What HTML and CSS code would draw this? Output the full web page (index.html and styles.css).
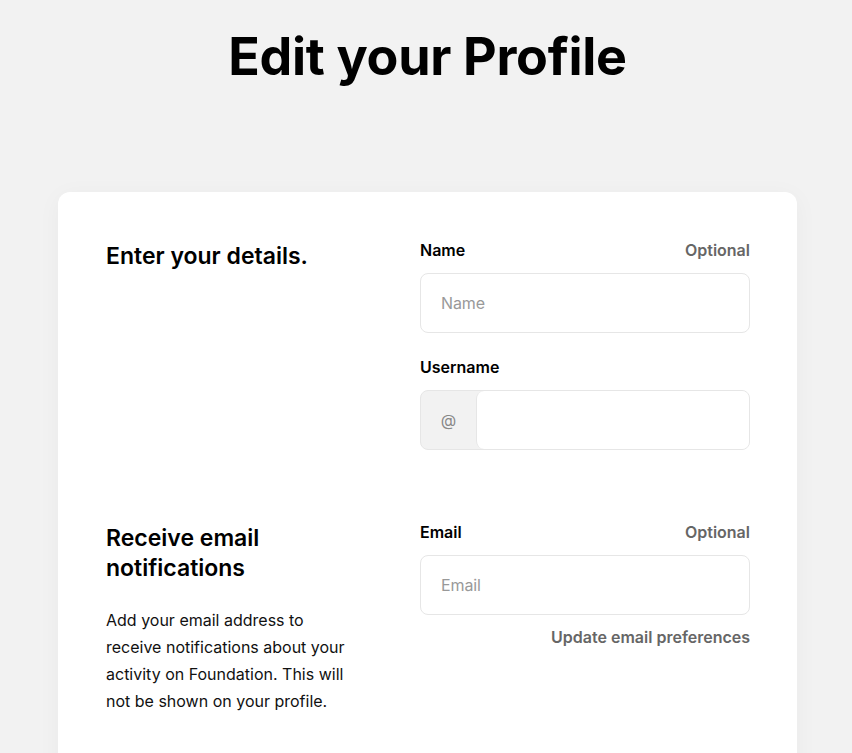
FILE: index.html
```html
<!DOCTYPE html>
<html lang="en">
<head>
<meta charset="utf-8">
<title>Edit your Profile</title>
<link rel="stylesheet" href="styles.css">
</head>
<body>
<main class="page">
  <h1 class="title">Edit your Profile</h1>
  <section class="card">
    <div class="row">
      <div class="intro">
        <h2 class="intro-title">Enter your details.</h2>
      </div>
      <div class="fields">
        <div class="field">
          <div class="label-row">
            <label class="label">Name</label>
            <span class="optional">Optional</span>
          </div>
          <div class="input"><span class="placeholder">Name</span></div>
        </div>
        <div class="field">
          <div class="label-row">
            <label class="label">Username</label>
          </div>
          <div class="input input-group">
            <span class="prefix">@</span>
            <span class="input-main"></span>
          </div>
        </div>
      </div>
    </div>
    <div class="row">
      <div class="intro">
        <h2 class="intro-title">Receive email notifications</h2>
        <p class="intro-text">Add your email address to receive notifications about your activity on Foundation. This will not be shown on your profile.</p>
      </div>
      <div class="fields">
        <div class="field">
          <div class="label-row">
            <label class="label">Email</label>
            <span class="optional">Optional</span>
          </div>
          <div class="input"><span class="placeholder">Email</span></div>
          <a class="link">Update email preferences</a>
        </div>
      </div>
    </div>
  </section>
</main>
</body>
</html>
```

FILE: styles.css
```css
* { box-sizing: border-box; }
html, body {
  margin: 0;
  padding: 0;
  background: #f2f2f2;
  font-family: "Inter", "Liberation Sans", sans-serif;
  color: #000;
}
.page {
  padding: 26px 55px 0 58px;
  display: flex;
  flex-direction: column;
  align-items: stretch;
}
.title {
  margin: 0;
  text-align: center;
  font-size: 52px;
  line-height: 62px;
  font-weight: 700;
  letter-spacing: -0.3px;
}
.card {
  margin-top: 104px;
  background: #fff;
  border-radius: 12px;
  box-shadow: 0 4px 24px rgba(0, 0, 0, 0.04);
  padding: 48px 47px 48px 48px;
  display: flex;
  flex-direction: column;
  gap: 72px;
  min-height: 600px;
}
.row {
  display: grid;
  grid-template-columns: 1fr 330px;
}
.intro {
  max-width: 250px;
}
.intro-title {
  margin: 1px 0 0;
  font-size: 23px;
  line-height: 30px;
  font-weight: 600;
  letter-spacing: 0;
}
.intro-text {
  margin: 24px 0 0;
  font-size: 16px;
  line-height: 27px;
  font-weight: 400;
  color: #111;
  letter-spacing: 0;
}
.fields {
  display: flex;
  flex-direction: column;
  gap: 24px;
}
.field {
  display: flex;
  flex-direction: column;
}
.label-row {
  display: flex;
  justify-content: space-between;
  align-items: baseline;
  margin-bottom: 13px;
  height: 20px;
}
.label {
  font-size: 16px;
  font-weight: 600;
  line-height: 20px;
}
.optional {
  font-size: 16px;
  font-weight: 600;
  line-height: 20px;
  color: #666;
}
.input {
  height: 60px;
  border: 1px solid #e6e6e6;
  border-radius: 8px;
  display: flex;
  align-items: center;
  padding: 0 20px;
  background: #fff;
}
.placeholder {
  font-size: 16px;
  color: #999;
  letter-spacing: -0.1px;
}
.input-group {
  padding: 0;
  overflow: hidden;
  background: #f2f2f2;
}
.prefix {
  width: 55px;
  align-self: stretch;
  display: flex;
  align-items: center;
  justify-content: center;
  color: #888;
  font-size: 16px;
}
.input-main {
  flex: 1;
  align-self: stretch;
  background: #fff;
  border-left: 1px solid #e6e6e6;
  border-radius: 8px 0 0 8px;
}
.link {
  margin-top: 12px;
  align-self: flex-end;
  font-size: 16px;
  font-weight: 600;
  line-height: 20px;
  color: #666;
}
```
